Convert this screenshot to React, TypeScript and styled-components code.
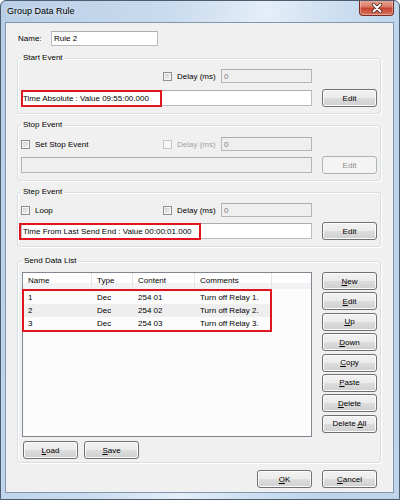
import React from 'react'
import styled, { createGlobalStyle } from 'styled-components'

const FONT = `"Liberation Sans", Arial, sans-serif`

const GlobalStyle = createGlobalStyle`
  html, body {
    margin: 0;
    padding: 0;
    background: #fff;
  }
  #root {
    width: 400px;
    height: 500px;
  }
  * {
    box-sizing: border-box;
  }
`

interface Row {
  name: string
  type: string
  content: string
  comment: string
}

const rows: Row[] = [
  { name: '1', type: 'Dec', content: '254 01', comment: 'Turn off Relay 1.' },
  { name: '2', type: 'Dec', content: '254 02', comment: 'Turn off Relay 2.' },
  { name: '3', type: 'Dec', content: '254 03', comment: 'Turn off Relay 3.' },
]

const App: React.FC = () => {
  return (
    <>
      <GlobalStyle />
      <Window>
        <TitleBar>
          <Title>Group Data Rule</Title>
          <CloseButton>
            <svg width="12" height="10" viewBox="0 0 12 10">
              <path d="M2.5 1.5 L9.5 8.5 M9.5 1.5 L2.5 8.5" stroke="#4a2520" strokeWidth="3.4" strokeLinecap="round" />
              <path d="M2.5 1.5 L9.5 8.5 M9.5 1.5 L2.5 8.5" stroke="#fff" strokeWidth="1.8" strokeLinecap="round" />
            </svg>
          </CloseButton>
        </TitleBar>

        <Client>
          <NameRow>
            <NameLabel>Name:</NameLabel>
            <TextBox $w={107} $h={15}>Rule 2</TextBox>
          </NameRow>

          <Group $top={7} $padTop={6}>
            <Legend>Start Event</Legend>
            <EventGrid $gap={6}>
              <Check $col={2}>
                <Box />
                Delay (ms)
              </Check>
              <TextBox $disabled $h={14}>0</TextBox>
              <LongBox>
                Time Absolute : Value 09:55:00.000
                <Annotation $left={-1} $top={-1} $w={141} $h={17} />
              </LongBox>
              <ButtonCell>
                <Button>Edit</Button>
              </ButtonCell>
            </EventGrid>
          </Group>

          <Group $top={6} $padTop={7}>
            <Legend>Stop Event</Legend>
            <EventGrid $gap={5}>
              <Check>
                <Box />
                Set Stop Event
              </Check>
              <Check $disabled>
                <Box $disabled />
                Delay (ms)
              </Check>
              <TextBox $disabled $h={14}>0</TextBox>
              <LongBox $disabled />
              <ButtonCell>
                <Button disabled>Edit</Button>
              </ButtonCell>
            </EventGrid>
          </Group>

          <Group $top={6} $padTop={6}>
            <Legend>Step Event</Legend>
            <EventGrid $gap={5}>
              <Check>
                <Box />
                Loop
              </Check>
              <Check>
                <Box />
                Delay (ms)
              </Check>
              <TextBox $disabled $h={14}>0</TextBox>
              <LongBox>
                Time From Last Send End : Value 00:00:01.000
                <Annotation $left={-3} $top={-1} $w={182} $h={17} />
              </LongBox>
              <ButtonCell>
                <Button>Edit</Button>
              </ButtonCell>
            </EventGrid>
          </Group>

          <Group $top={9} $padTop={6} $padLeft={4} $padBottom={3}>
            <Legend>Send Data List</Legend>
            <ListArea>
              <ListView>
                <ListHeader>
                  <HeaderCell $w={69}>Name</HeaderCell>
                  <HeaderCell $w={41}>Type</HeaderCell>
                  <HeaderCell $w={62}>Content</HeaderCell>
                  <HeaderCell $w={77}>Comments</HeaderCell>
                </ListHeader>
                <Marked>
                  {rows.map((r, i) => (
                    <ListRow key={r.name} $alt={i === 1}>
                      <Cell $w={68} $pad={4}>{r.name}</Cell>
                      <Cell $w={41}>{r.type}</Cell>
                      <Cell $w={62}>{r.content}</Cell>
                      <Cell>{r.comment}</Cell>
                    </ListRow>
                  ))}
                </Marked>
              </ListView>
              <SideButtons>
                <Button><u>N</u>ew</Button>
                <Button><u>E</u>dit</Button>
                <Button><u>U</u>p</Button>
                <Button><u>D</u>own</Button>
                <Button><u>C</u>opy</Button>
                <Button><u>P</u>aste</Button>
                <Button><u>D</u>elete</Button>
                <Button>Delete <u>A</u>ll</Button>
              </SideButtons>
            </ListArea>
            <FileButtons>
              <Button><u>L</u>oad</Button>
              <Button><u>S</u>ave</Button>
            </FileButtons>
          </Group>

          <Footer>
            <Button><u>O</u>K</Button>
            <Button><u>C</u>ancel</Button>
          </Footer>
        </Client>
      </Window>
    </>
  )
}
export default App

const Window = styled.div`
  width: 400px;
  height: 500px;
  display: flex;
  flex-direction: column;
  border: 1px solid #4d5d70;
  border-radius: 6px 6px 0 0;
  background: linear-gradient(100deg, #b8cee7 0%, #c9dbee 35%, #e4eef8 55%, #cfe0f1 68%, #bcd3ea 85%, #c0d5ec 100%);
  font-family: ${FONT};
  font-size: 8px;
  color: #000;
  overflow: hidden;
`

const TitleBar = styled.div`
  height: 21px;
  display: flex;
  align-items: flex-start;
  padding-left: 6px;
`

const Title = styled.div`
  flex: 1;
  font-size: 9px;
  line-height: 20px;
  color: #000;
  text-shadow: 0 0 4px rgba(255, 255, 255, 0.9);
`

const CloseButton = styled.div`
  width: 35px;
  height: 16px;
  margin: -1px 5px 0 0;
  display: flex;
  align-items: center;
  justify-content: center;
  border: 1px solid #7a2b22;
  border-top: none;
  border-radius: 0 0 4px 4px;
  background: linear-gradient(#e9aa9b 0%, #dc7b66 45%, #c4432f 55%, #d8725c 100%);
  box-shadow: inset 0 0 0 1px rgba(255, 255, 255, 0.35);
`

const Client = styled.div`
  flex: 1;
  margin: 0 5px 6px 4px;
  padding: 8px 12px 0 11px;
  background: #f0f0f0;
  border: 1px solid #8197b0;
  display: flex;
  flex-direction: column;
`

const NameRow = styled.div`
  display: flex;
  align-items: center;
  height: 15px;
  padding-left: 1px;
`

const NameLabel = styled.span`
  width: 33px;
`

const TextBox = styled.div<{ $w?: number; $h: number; $disabled?: boolean }>`
  position: relative;
  width: ${p => (p.$w ? `${p.$w}px` : 'auto')};
  height: ${p => p.$h}px;
  padding-left: 2px;
  display: flex;
  align-items: center;
  white-space: nowrap;
  border: 1px solid ${p => (p.$disabled ? '#b6b6b6' : '#b9bcc2')};
  border-top-color: ${p => (p.$disabled ? '#adadad' : '#abadb3')};
  background: ${p => (p.$disabled ? '#efefef' : '#fff')};
  color: ${p => (p.$disabled ? '#7a7a7a' : '#000')};
`

const LongBox = styled(TextBox).attrs({ $h: 16 })`
  grid-column: 1 / 4;
  align-self: center;
  padding-left: 1px;
`

const Annotation = styled.span<{ $left: number; $top: number; $w: number; $h: number }>`
  position: absolute;
  left: ${p => p.$left}px;
  top: ${p => p.$top}px;
  width: ${p => p.$w}px;
  height: ${p => p.$h}px;
  border: 2px solid #e0151f;
  pointer-events: none;
`

const Group = styled.fieldset<{ $top: number; $padTop: number; $padLeft?: number; $padBottom?: number }>`
  margin: ${p => p.$top}px 0 0;
  padding: ${p => p.$padTop}px 3px ${p => p.$padBottom ?? 6}px ${p => p.$padLeft ?? 3}px;
  border: 1px solid #d5dfe5;
  border-radius: 3px;
  box-shadow: 1px 1px 0 #fff, inset 1px 1px 0 #fff;
  min-width: 0;
`

const Legend = styled.legend`
  padding: 0 2px;
  line-height: 10px;
  font-size: 8px;
  color: #000;
`

const EventGrid = styled.div<{ $gap: number }>`
  display: grid;
  grid-template-columns: 142px 58px 91px 10px 55px;
  grid-template-rows: 14px 18px;
  row-gap: ${p => p.$gap}px;
`

const Check = styled.label<{ $disabled?: boolean; $col?: number }>`
  display: flex;
  align-items: center;
  gap: 5px;
  white-space: nowrap;
  grid-column: ${p => p.$col ?? 'auto'};
  color: ${p => (p.$disabled ? '#a3a3a3' : '#000')};
`

const Box = styled.span<{ $disabled?: boolean }>`
  width: 9px;
  height: 9px;
  flex: none;
  border: 1px solid ${p => (p.$disabled ? '#c6c6c6' : '#8e8f8f')};
  background: ${p => (p.$disabled ? '#f7f7f7' : 'linear-gradient(135deg, #c6cad0 0%, #e6e7e9 60%, #f7f7f7 100%)')};
  box-shadow: inset 0 0 0 1px #f6f6f6;
`

const ButtonCell = styled.div`
  grid-column: 5;
  display: flex;
`

const Button = styled.button`
  width: 55px;
  height: 18px;
  padding: 0;
  font-family: ${FONT};
  font-size: 8px;
  color: #000;
  border: 1px solid #707070;
  border-radius: 3px;
  background: linear-gradient(#f2f2f2 0%, #ebebeb 50%, #dddddd 50%, #cfcfcf 100%);
  box-shadow: inset 0 0 0 1px #fbfbfb;
  flex: none;

  u {
    text-underline-offset: 1px;
  }

  &:disabled {
    border-color: #adb2b5;
    background: #f4f4f4;
    box-shadow: none;
    color: #8f8f8f;
  }
`

const ListArea = styled.div`
  display: flex;
  gap: 10px;
`

const ListView = styled.div`
  width: 290px;
  height: 165px;
  border: 1px solid #828790;
  background: #fcfcfc;
`

const ListHeader = styled.div`
  display: flex;
  height: 16px;
  background: linear-gradient(#ffffff 0%, #ffffff 60%, #f1f2f4 60%, #f1f2f4 100%);
`

const HeaderCell = styled.div<{ $w: number }>`
  width: ${p => p.$w}px;
  padding-left: 5px;
  line-height: 16px;
  border-right: 1px solid #e3e5e8;
`

const Marked = styled.div`
  width: 250px;
  margin-left: -1px;
  border: 2px solid #e0151f;
`

const ListRow = styled.div<{ $alt?: boolean }>`
  display: flex;
  height: 13px;
  line-height: 13px;
  background: ${p => (p.$alt ? '#eeeeee' : 'transparent')};
`

const Cell = styled.div<{ $w?: number; $pad?: number }>`
  width: ${p => (p.$w ? `${p.$w}px` : 'auto')};
  flex: ${p => (p.$w ? 'none' : '1')};
  padding-left: ${p => p.$pad ?? 5}px;
  white-space: nowrap;
`

const SideButtons = styled.div`
  display: flex;
  flex-direction: column;
  gap: 2.4px;
`

const FileButtons = styled.div`
  display: flex;
  gap: 6px;
  margin-top: 4px;
  padding-left: 1px;
`

const Footer = styled.div`
  display: flex;
  justify-content: flex-end;
  gap: 10px;
  margin-top: 7px;
  padding-right: 4px;
`
